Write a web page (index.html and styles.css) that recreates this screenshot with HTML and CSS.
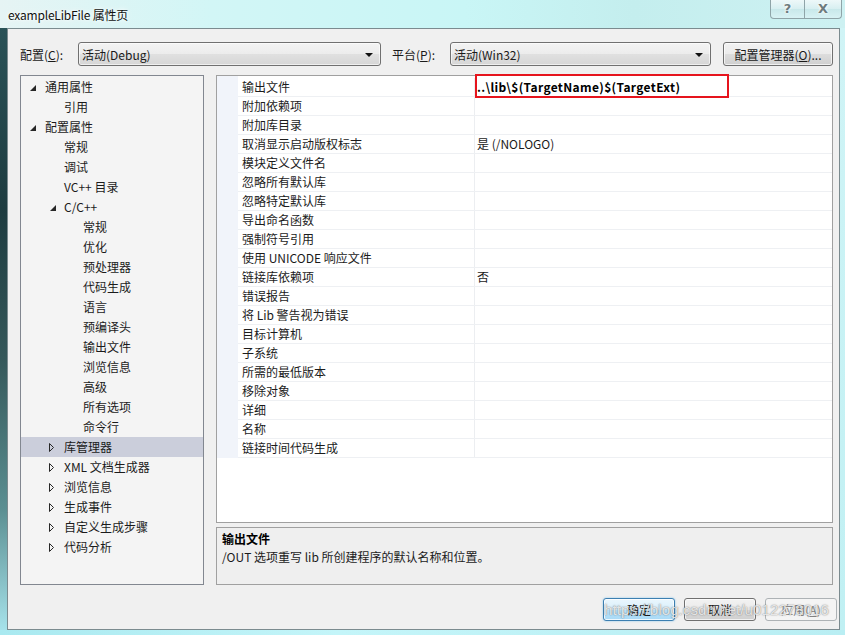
FILE: index.html
```html
<!DOCTYPE html>
<html lang="zh-CN">
<head>
<meta charset="utf-8">
<title>exampleLibFile 属性页</title>
<link rel="stylesheet" href="styles.css">
</head>
<body>
<div class="screen">
  <div class="titlebar">
    <span class="title">exampleLibFile 属性页</span>
    <div class="caption">
      <div class="cap-btn cap-help">?</div>
      <div class="cap-btn cap-close">X</div>
    </div>
  </div>
  <div class="middle">
    <div class="frame-left"></div>
    <div class="client">
      <div class="toprow">
        <span class="lbl lbl-config">配置(<u>C</u>):</span>
        <div class="combo combo-config"><span>活动(Debug)</span><i class="arrow"></i></div>
        <span class="lbl lbl-platform">平台(<u>P</u>):</span>
        <div class="combo combo-platform"><span>活动(Win32)</span><i class="arrow"></i></div>
        <div class="btn btn-manager">配置管理器(<u>O</u>)...</div>
      </div>
      <div class="main">
        <div class="tree">
          <div class="trow l0"><span class="tg"><svg width="6" height="6" viewBox="0 0 6 6"><path d="M6 0V6H0Z" fill="#262626"/></svg></span>通用属性</div>
          <div class="trow l1"><span class="tg"></span>引用</div>
          <div class="trow l0"><span class="tg"><svg width="6" height="6" viewBox="0 0 6 6"><path d="M6 0V6H0Z" fill="#262626"/></svg></span>配置属性</div>
          <div class="trow l1"><span class="tg"></span>常规</div>
          <div class="trow l1"><span class="tg"></span>调试</div>
          <div class="trow l1"><span class="tg"></span>VC++ 目录</div>
          <div class="trow l1"><span class="tg"><svg width="6" height="6" viewBox="0 0 6 6"><path d="M6 0V6H0Z" fill="#262626"/></svg></span>C/C++</div>
          <div class="trow l2"><span class="tg"></span>常规</div>
          <div class="trow l2"><span class="tg"></span>优化</div>
          <div class="trow l2"><span class="tg"></span>预处理器</div>
          <div class="trow l2"><span class="tg"></span>代码生成</div>
          <div class="trow l2"><span class="tg"></span>语言</div>
          <div class="trow l2"><span class="tg"></span>预编译头</div>
          <div class="trow l2"><span class="tg"></span>输出文件</div>
          <div class="trow l2"><span class="tg"></span>浏览信息</div>
          <div class="trow l2"><span class="tg"></span>高级</div>
          <div class="trow l2"><span class="tg"></span>所有选项</div>
          <div class="trow l2"><span class="tg"></span>命令行</div>
          <div class="trow l1 sel"><span class="tg"><svg width="5" height="9" viewBox="0 0 5 9"><path d="M0.5 0.5L4.5 4.5L0.5 8.5Z" fill="none" stroke="#262626"/></svg></span>库管理器</div>
          <div class="trow l1"><span class="tg"><svg width="5" height="9" viewBox="0 0 5 9"><path d="M0.5 0.5L4.5 4.5L0.5 8.5Z" fill="none" stroke="#262626"/></svg></span>XML 文档生成器</div>
          <div class="trow l1"><span class="tg"><svg width="5" height="9" viewBox="0 0 5 9"><path d="M0.5 0.5L4.5 4.5L0.5 8.5Z" fill="none" stroke="#262626"/></svg></span>浏览信息</div>
          <div class="trow l1"><span class="tg"><svg width="5" height="9" viewBox="0 0 5 9"><path d="M0.5 0.5L4.5 4.5L0.5 8.5Z" fill="none" stroke="#262626"/></svg></span>生成事件</div>
          <div class="trow l1"><span class="tg"><svg width="5" height="9" viewBox="0 0 5 9"><path d="M0.5 0.5L4.5 4.5L0.5 8.5Z" fill="none" stroke="#262626"/></svg></span>自定义生成步骤</div>
          <div class="trow l1"><span class="tg"><svg width="5" height="9" viewBox="0 0 5 9"><path d="M0.5 0.5L4.5 4.5L0.5 8.5Z" fill="none" stroke="#262626"/></svg></span>代码分析</div>
        </div>
        <div class="rightcol">
          <div class="grid">
            <div class="rows">
              <div class="prow"><span class="pname">输出文件</span><span class="pval bold">..\lib\$(TargetName)$(TargetExt)</span></div>
              <div class="prow"><span class="pname">附加依赖项</span><span class="pval"></span></div>
              <div class="prow"><span class="pname">附加库目录</span><span class="pval"></span></div>
              <div class="prow"><span class="pname">取消显示启动版权标志</span><span class="pval">是 (/NOLOGO)</span></div>
              <div class="prow"><span class="pname">模块定义文件名</span><span class="pval"></span></div>
              <div class="prow"><span class="pname">忽略所有默认库</span><span class="pval"></span></div>
              <div class="prow"><span class="pname">忽略特定默认库</span><span class="pval"></span></div>
              <div class="prow"><span class="pname">导出命名函数</span><span class="pval"></span></div>
              <div class="prow"><span class="pname">强制符号引用</span><span class="pval"></span></div>
              <div class="prow"><span class="pname">使用 UNICODE 响应文件</span><span class="pval"></span></div>
              <div class="prow"><span class="pname">链接库依赖项</span><span class="pval">否</span></div>
              <div class="prow"><span class="pname">错误报告</span><span class="pval"></span></div>
              <div class="prow"><span class="pname">将 Lib 警告视为错误</span><span class="pval"></span></div>
              <div class="prow"><span class="pname">目标计算机</span><span class="pval"></span></div>
              <div class="prow"><span class="pname">子系统</span><span class="pval"></span></div>
              <div class="prow"><span class="pname">所需的最低版本</span><span class="pval"></span></div>
              <div class="prow"><span class="pname">移除对象</span><span class="pval"></span></div>
              <div class="prow"><span class="pname">详细</span><span class="pval"></span></div>
              <div class="prow"><span class="pname">名称</span><span class="pval"></span></div>
              <div class="prow"><span class="pname">链接时间代码生成</span><span class="pval"></span></div>
            </div>
            <div class="redbox"></div>
          </div>
          <div class="desc">
            <div class="desc-title">输出文件</div>
            <div class="desc-text">/OUT 选项重写 lib 所创建程序的默认名称和位置。</div>
          </div>
        </div>
      </div>
      <div class="btnrow">
        <div class="btn btn-dlg btn-default">确定</div>
        <div class="btn btn-dlg">取消</div>
        <div class="btn btn-dlg btn-disabled">应用(<u>A</u>)</div>
      </div>
    </div>
    <div class="frame-right"></div>
  </div>
  <div class="frame-bottom"></div>
  <div class="watermark">https://blog.csdn.net/u012278016</div>
</div>
</body>
</html>
```
FILE: styles.css
```css
* { box-sizing: border-box; }
html, body { margin: 0; padding: 0; }
body {
  width: 845px;
  height: 635px;
  overflow: hidden;
  font-family: "Noto Sans CJK SC", "Noto Sans", sans-serif;
  font-size: 12px;
  color: #1a1a1a;
}
.screen {
  position: relative;
  width: 845px;
  height: 635px;
  background: #c6f3f4;
}
.titlebar {
  height: 28px;
  display: flex;
  align-items: center;
  padding-left: 8px;
  background: linear-gradient(to right, #e6f4f4 0%, #d2f6f6 25%, #c9f6f6 55%, #c4eeee 75%, #cdf1f2 100%);
}
.title {
  font-size: 12px;
  color: #111;
  text-shadow: 0 0 6px #fff, 0 0 3px #fff;
  letter-spacing: -0.2px;
}
.caption {
  margin-left: auto;
  align-self: flex-start;
  display: flex;
  margin-right: 3px;
}
.cap-btn {
  height: 19px;
  border: 1px solid #8fa4a8;
  border-top: none;
  background: linear-gradient(#eef8f9, #d7eff1 50%, #c8e8ea 51%, #d8f2f4);
  color: #6d7b7e;
  font-family: "DejaVu Sans", sans-serif;
  font-size: 13px;
  font-weight: bold;
  line-height: 18px;
  text-align: center;
  text-shadow: 0 0 2px #fff, 0 0 3px #fff;
}
.cap-help { width: 35px; border-bottom-left-radius: 4px; }
.cap-close { width: 37px; border-left: none; border-bottom-right-radius: 4px; }

.middle { display: flex; height: 602px; }
.frame-left {
  width: 7px;
  background: linear-gradient(#2a5257 0%, #1e3c40 30%, #35585a 55%, #5b8f92 80%, #a6e2ea 100%);
}
.frame-right {
  width: 5px;
  background: linear-gradient(#d0f4f6, #c0f0f3);
}
.frame-bottom {
  height: 5px;
  background: linear-gradient(to right, #a9e9f0, #c4f5f9 40%, #b9eef3);
}
.client {
  width: 833px;
  height: 602px;
  border: 1px solid #7b8b8f;
  background: #f0f0f0;
  padding: 13px 0 0 12px;
}

.toprow { display: flex; align-items: center; height: 24px; }
.lbl { white-space: nowrap; }
.lbl-config { width: 58px; }
.lbl-platform { width: 58px; margin-left: 11px; }
u { text-decoration: underline; text-underline-offset: 1px; }
.combo {
  height: 24px;
  border: 1px solid #707070;
  border-radius: 3px;
  background: linear-gradient(#f3f3f3 0%, #ececec 50%, #e0e0e0 51%, #d6d6d6 100%);
  box-shadow: inset 0 0 0 1px rgba(255,255,255,0.6);
  display: flex;
  align-items: center;
  padding-left: 3px;
  padding-right: 7px;
}
.combo span { flex: 1; }
.combo-config { width: 303px; }
.combo-platform { width: 261px; }
.arrow {
  width: 0; height: 0;
  border-left: 4px solid transparent;
  border-right: 4px solid transparent;
  border-top: 4px solid #111;
  margin-top: 1px;
}
.btn {
  height: 24px;
  border: 1px solid #707070;
  border-radius: 3px;
  background: linear-gradient(#f2f2f2 0%, #ebebeb 50%, #dddddd 51%, #cfcfcf 100%);
  box-shadow: inset 0 0 0 1px rgba(255,255,255,0.7);
  display: flex;
  align-items: center;
  justify-content: center;
  white-space: nowrap;
}
.btn-manager { width: 110px; margin-left: 12px; }

.main { display: flex; margin-top: 9px; height: 510px; }
.tree {
  width: 184px;
  height: 510px;
  border: 1px solid #828790;
  background: #f4f4f4;
  padding-top: 1px;
}
.trow {
  height: 20px;
  line-height: 20px;
  display: flex;
  align-items: center;
  white-space: nowrap;
  color: #1b1b1b;
}
.tg {
  width: 15px;
  height: 20px;
  display: flex;
  align-items: center;
  padding-top: 1px;
}
.tg svg { display: block; }
.l0 { padding-left: 9px; }
.l1 { padding-left: 28px; }
.l2 { padding-left: 47px; }
.l1 .tg svg[width="6"] { margin-left: 1px; }
.sel { background: #cbcedb; }

.rightcol { margin-left: 12px; width: 617px; display: flex; flex-direction: column; }
.grid {
  position: relative;
  height: 448px;
  border: 1px solid #a0a0a0;
  background: #fff;
}
.rows {
  padding-top: 2px;
  background: linear-gradient(to right, #f1f4fa 21px, #ffffff 21px);
}
.prow {
  margin-left: 21px;
  display: flex;
  height: 19px;
  border-bottom: 1px solid #eef0f3;
}
.pname {
  width: 237px;
  padding-left: 4px;
  line-height: 18px;
  border-right: 1px solid #eceef1;
  white-space: nowrap;
  color: #1b1b1b;
}
.pval {
  flex: 1;
  padding-left: 2px;
  line-height: 18px;
  white-space: nowrap;
  color: #1b1b1b;
}
.bold { font-weight: bold; color: #000; letter-spacing: 0.35px; }
.redbox {
  position: absolute;
  left: 258px;
  top: -2px;
  width: 254px;
  height: 24px;
  border: 2px solid #e6141d;
}
.desc {
  margin-top: 4px;
  height: 58px;
  border: 1px solid #a0a0a0;
  background: #efefef;
  padding: 2px 0 0 5px;
}
.desc-title { font-weight: bold; line-height: 18px; color: #000; }
.desc-text { line-height: 18px; color: #1b1b1b; }

.btnrow {
  display: flex;
  justify-content: flex-end;
  gap: 9px;
  margin-top: 13px;
  padding-right: 2px;
}
.btn-dlg { width: 72px; height: 23px; }
.btn-default {
  border-color: #3c7fb1;
  background: linear-gradient(#eaf6fd 0%, #d9f0fc 50%, #bee6fd 51%, #a7d9f5 100%);
  box-shadow: inset 0 0 0 1px rgba(255,255,255,0.8), 0 0 2px #7fc3ec;
}
.btn-disabled {
  border-color: #adb2b5;
  background: #f4f4f4;
  color: #838383;
  box-shadow: none;
}

.watermark {
  position: absolute;
  left: 604px;
  top: 601px;
  font-family: "Liberation Sans", sans-serif;
  font-size: 15px;
  color: rgba(255,255,255,0.8);
  text-shadow: 0 0 1px rgba(60,60,60,0.55), 0 0 2px rgba(60,60,60,0.35);
  white-space: nowrap;
  letter-spacing: 0.1px;
  pointer-events: none;
}
```
